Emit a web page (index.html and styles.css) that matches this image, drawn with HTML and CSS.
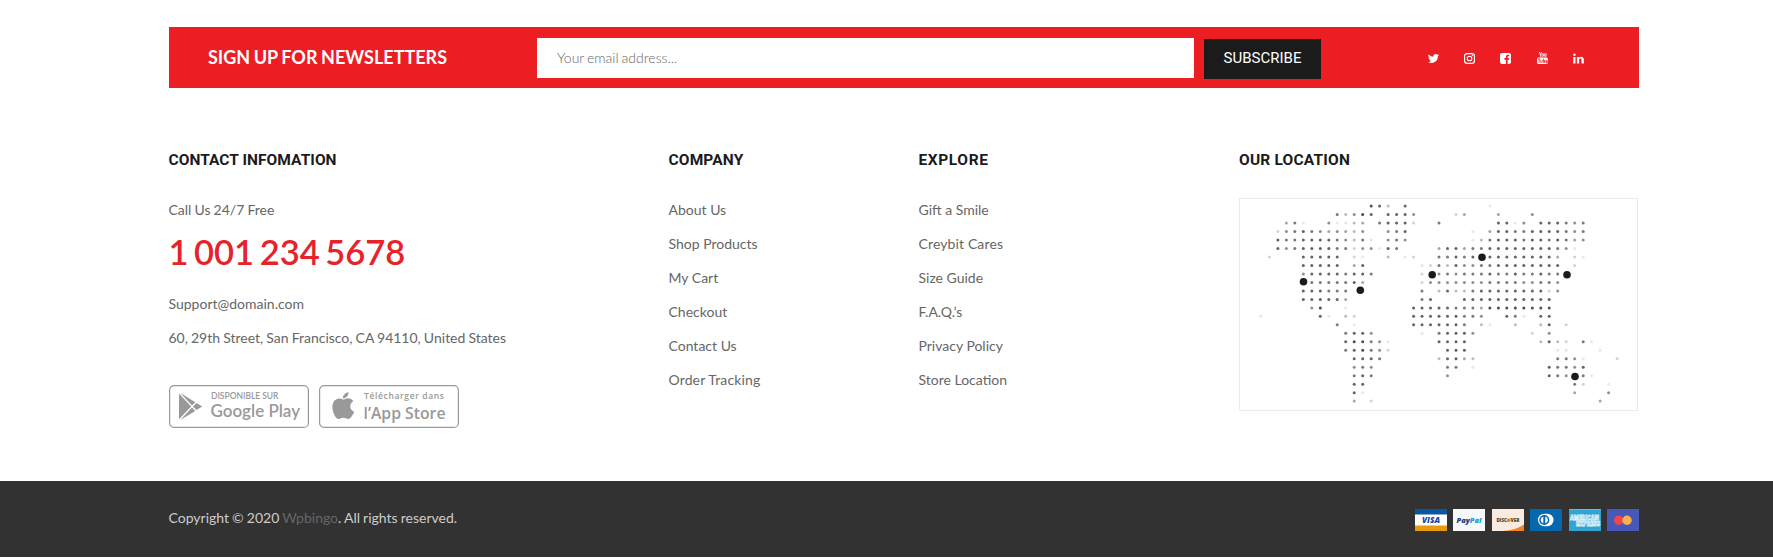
FILE: index.html
```html
<!DOCTYPE html>
<html lang="en">
<head>
<meta charset="utf-8">
<title>Footer</title>
<link rel="stylesheet" href="styles.css">
</head>
<body>
<footer>
  <section class="newsletter">
    <h2 class="newsletter-title">SIGN UP FOR NEWSLETTERS</h2>
    <form class="newsletter-form">
      <input class="email" type="email" placeholder="Your email address...">
      <button class="subscribe" type="button">SUBSCRIBE</button>
    </form>
    <nav class="social">
      <a><svg viewBox="0 0 24 24"><path d="M24 4.6a10 10 0 0 1-2.8.8 5 5 0 0 0 2.1-2.7 10 10 0 0 1-3.1 1.2A4.9 4.9 0 0 0 11.800 8.400 14 14 0 0 1 1.700 3.200a4.900 4.900 0 0 0 1.500 6.600 5 5 0 0 1-2.200-.6 4.900 4.900 0 0 0 3.900 4.900 5 5 0 0 1-2.200.1 4.900 4.900 0 0 0 4.600 3.400A10 10 0 0 1 0 19.500 14 14 0 0 0 21.500 7.100 10 10 0 0 0 24 4.600z"/></svg></a>
      <a><svg viewBox="0 0 24 24"><path fill-rule="evenodd" d="M7 0h10a7 7 0 0 1 7 7v10a7 7 0 0 1-7 7H7a7 7 0 0 1-7-7V7a7 7 0 0 1 7-7zm0 2.500A4.500 4.500 0 0 0 2.500 7v10A4.500 4.500 0 0 0 7 21.500h10a4.500 4.500 0 0 0 4.500-4.500V7A4.500 4.500 0 0 0 17 2.500zM12 5.800a6.200 6.200 0 1 1 0 12.400 6.200 6.200 0 0 1 0-12.400zm0 2.400a3.800 3.800 0 1 0 0 7.600 3.800 3.800 0 0 0 0-7.600z"/><circle cx="18.400" cy="5.600" r="1.600"/></svg></a>
      <a><svg viewBox="0 0 24 24"><path d="M4.500 0h15A4.500 4.500 0 0 1 24 4.500v15a4.500 4.500 0 0 1-4.500 4.500h-3v-9.300h3.100l.5-3.600h-3.600V8.800c0-1 .3-1.800 1.800-1.800h1.900V3.800c-.3 0-1.500-.1-2.800-.1-2.800 0-4.600 1.700-4.600 4.700v2.700H9.600v3.600h3.200V24H4.500A4.500 4.500 0 0 1 0 19.500v-15A4.500 4.500 0 0 1 4.500 0z"/></svg></a>
      <a><svg class="tall" viewBox="0 0 24 26"><path d="M4 0h2l1.300 4.200L8.600 0h2L8.200 6v4H6.300V6zM12.300 2.500c2 0 2.500 1 2.500 2.500v2.500c0 1.700-.8 2.600-2.500 2.600S9.900 9.200 9.900 7.500V5c0-1.500.6-2.500 2.400-2.500zm0 1.700c-.6 0-.7.400-.7.900v2.600c0 .5.200.8.700.8s.7-.3.700-.8V5.100c0-.5-.2-.9-.7-.9zM16 2.700h1.700V8c0 .5.600.3 1.200-.3v-5h1.700V10h-1.700v-.8C17.700 10.500 16 10.400 16 8.700z"/><path fill-rule="evenodd" d="M3.500 12h17a3.500 3.500 0 0 1 3.500 3.500v7a3.500 3.500 0 0 1-3.500 3.500h-17A3.500 3.500 0 0 1 0 22.500v-7A3.500 3.500 0 0 1 3.500 12zM2 14v1.600h1.800v8h1.700v-8h1.800V14zM7.500 17v5.300c0 1.800 1.800 1.600 2.900.4v.9h1.400V17h-1.400v5c-.7.700-1.400.7-1.400 0v-5zM13 14v9.600h1.400V23c1.200 1.200 3 .8 3-1.200v-3c0-2-1.700-2.500-2.900-1.200V14zm1.500 4.900c.6-.8 1.400-.5 1.400.3v2.300c0 .9-.8 1.200-1.400.5zM18.500 19.500v2c0 3 4.500 3 4.500 0v-.6h-1.500c0 2.100-1.500 1.900-1.500.6v-.8h3v-1.200c0-3.200-4.500-3.200-4.500 0zm1.500 0c0-1.600 1.500-1.600 1.500 0z"/></svg></a>
      <a><svg viewBox="0 0 24 24"><path d="M.5 8.500h4.900V23H.5zM8.500 8.500h4.700v2c2.300-3.600 10.300-3.300 10.300 3.500v9h-4.900v-8c0-4-5.200-3.700-5.200 0v8H8.500z"/><circle cx="3" cy="3.800" r="2.800"/></svg></a>
    </nav>
  </section>

  <section class="columns container">
    <div class="column contact">
      <h3 class="heading">CONTACT INFOMATION</h3>
      <p class="line">Call Us 24/7 Free</p>
      <p class="phone">1 001 234 5678</p>
      <p class="line">Support@domain.com</p>
      <p class="line">60, 29th Street, San Francisco, CA 94110, United States</p>
      <div class="badges">
        <svg class="badge" viewBox="0 0 140 43">
          <rect x=".6" y=".6" width="138.800" height="41.800" rx="4.500" class="badge-frame"/>
          <path d="M10 8.500v25.800L22.200 21.500zM11.300 8L23 20.600l3.300-3.400zM27.400 17.900L24 21.500l3.400 3.600 5.900-3.600zM23 22.400L11.300 35l15-9.100z"/>
          <text x="42" y="13.800" class="badge-small google" textLength="67.500" lengthAdjust="spacingAndGlyphs">DISPONIBLE SUR</text>
          <text x="41.500" y="32" class="badge-big google" textLength="89.500" lengthAdjust="spacingAndGlyphs">Google Play</text>
        </svg>
        <svg class="badge" viewBox="0 0 140 43">
          <rect x=".6" y=".6" width="138.800" height="41.800" rx="4.500" class="badge-frame"/>
          <path d="M29.500 7.200c.3 3.400-2.700 6.300-5.600 6.100-.3-3.200 2.800-6 5.600-6.100zM34.200 16.200c-4.400 2.700-3.700 8.600.9 10.500-1 3-3.500 7.200-6 7.200-1.900 0-2.400-1.100-4.700-1.100s-3 1.100-4.700 1.100c-3 0-6.300-6.300-6.300-11.700 0-8.800 7.300-9.600 9.500-8.300 1.300.7 2 .7 3.300.1 2.700-1.300 6.100-.8 8 2.200z"/>
          <text x="45" y="14.300" class="badge-small apple" textLength="80" lengthAdjust="spacing">Télécharger dans</text>
          <text x="44.500" y="33.500" class="badge-big apple" textLength="82" lengthAdjust="spacingAndGlyphs">l’App Store</text>
        </svg>
      </div>
    </div>
    <div class="column">
      <h3 class="heading company">COMPANY</h3>
      <p class="line">About Us</p>
      <p class="line">Shop Products</p>
      <p class="line">My Cart</p>
      <p class="line">Checkout</p>
      <p class="line">Contact Us</p>
      <p class="line loose">Order Tracking</p>
    </div>
    <div class="column">
      <h3 class="heading explore">EXPLORE</h3>
      <p class="line">Gift a Smile</p>
      <p class="line loose">Creybit Cares</p>
      <p class="line">Size Guide</p>
      <p class="line">F.A.Q.’s</p>
      <p class="line">Privacy Policy</p>
      <p class="line">Store Location</p>
    </div>
    <div class="column">
      <h3 class="heading location">OUR LOCATION</h3>
      <svg class="map" id="map" viewBox="0 0 399 213"></svg>
    </div>
  </section>

  <section class="bottom">
    <div class="bottom-inner container">
      <p class="copyright">Copyright © 2020 <a class="brand">Wpbingo</a>. All rights reserved.</p>
      <div class="cards">
        <svg class="card" viewBox="0 0 32 22"><rect width="32" height="22" fill="#fff"/><rect width="32" height="5.500" fill="#0c55a0"/><rect y="16.500" width="32" height="5.500" fill="#e89b0c"/><text x="7" y="14" textLength="18" lengthAdjust="spacingAndGlyphs" class="card-text" fill="#17479e" font-size="8">VISA</text></svg>
        <svg class="card" viewBox="0 0 32 22"><rect width="32" height="22" fill="#f7f8fb"/><text x="3.500" y="13.800" textLength="25" lengthAdjust="spacingAndGlyphs" class="card-text" fill="#253b80" font-size="7.500">Pay<tspan fill="#179bd7">Pal</tspan></text></svg>
        <svg class="card" viewBox="0 0 32 22"><rect width="32" height="22" fill="#f9ebe0"/><path d="M11 22Q24 21 32 15.500V22z" fill="#f58220"/><text x="4.500" y="13" textLength="10.500" lengthAdjust="spacingAndGlyphs" class="card-text upright" fill="#444" font-size="5">DISC</text><circle cx="16.600" cy="11.300" r="1.900" fill="#f58220"/><text x="18.500" y="13" textLength="9" lengthAdjust="spacingAndGlyphs" class="card-text upright" fill="#444" font-size="5">VER</text></svg>
        <svg class="card" viewBox="0 0 32 22"><rect width="32" height="22" fill="#0468ae"/><rect x="8" y="4.800" width="15.500" height="12.400" rx="6.200" fill="#fff"/><circle cx="14.300" cy="11" r="5.100" fill="#0468ae"/><path d="M13.300 7.400a3.800 3.800 0 0 0 0 7.200zM15.300 7.400a3.800 3.800 0 0 1 0 7.200z" fill="#fff"/></svg>
        <svg class="card" viewBox="0 0 32 22"><rect width="32" height="22" fill="#32a4d4"/><rect width="32" height="1" fill="#62bde0"/><g fill="#32a4d4" stroke="#e4f5fc" stroke-width=".8"><text x="1" y="10.800" textLength="29" lengthAdjust="spacingAndGlyphs" class="card-text upright" font-size="6.500">AMERICAN</text><text x="7" y="17" textLength="24" lengthAdjust="spacingAndGlyphs" class="card-text upright" font-size="6.500">EXPRESS</text></g></svg>
        <svg class="card" viewBox="0 0 32 22"><rect width="32" height="22" fill="#4758b8"/><circle cx="11.700" cy="11.200" r="4.700" fill="#f2444b"/><circle cx="20" cy="11.200" r="4.700" fill="#fbb04c"/></svg>
      </div>
    </div>
  </section>
</footer>
<script src="map.js"></script>
</body>
</html>
```
FILE: styles.css
```css
* { box-sizing: border-box; margin: 0; padding: 0; }
body { background: #fff; font-family: Lato, "Open Sans", sans-serif; font-size: 14px; color: #666; }
.container { width: 1470.500px; margin-left: 168.500px; }

.newsletter { width: 1470px; margin: 27px 0 0 169px; height: 61px; background: #ed1d24; display: flex; align-items: center; padding: 0 55px 0 39px; }
.newsletter-title { width: 329px; color: #fff; font-size: 18px; font-weight: 700; line-height: 24px; padding-bottom: 2px; word-spacing: -.8px; white-space: nowrap; }
.newsletter-form { display: flex; gap: 10px; align-items: flex-start; height: 39px; }
.email { width: 657px; height: 40px; border: 0; background: #fff; padding: 0 20px 1px; font: 300 14px Lato, sans-serif; word-spacing: -.8px; color: #666; }
.email::placeholder { color: #666; opacity: 1; }
.subscribe { width: 117px; height: 40px; margin-top: 1px; border: 0; background: #1b1b1b; color: #fff; font: 400 15px Roboto, sans-serif; padding-bottom: 2px; }
.social { margin-left: auto; display: flex; align-items: center; gap: 25.300px; padding-top: 1px; }
.social a { display: flex; width: 11px; }
.social svg { width: 11px; height: 11px; fill: #fff; }
.social .tall { height: 12px; }

.columns { display: grid; grid-template-columns: 500px 250px 320.500px 400px; height: 393px; padding-top: 61px; }
.heading { color: #1b1b1b; font: 700 15.500px/22px Roboto, sans-serif; margin-bottom: 22px; letter-spacing: .05px; white-space: nowrap; }
.company { letter-spacing: .15px; }
.explore { letter-spacing: .6px; }
.location { letter-spacing: .2px; }
.line { line-height: 34px; white-space: nowrap; }
.loose { letter-spacing: .13px; }
.contact .line { word-spacing: -.5px; }
.phone { font-size: 34.500px; font-weight: 600; line-height: 50px; padding-bottom: 10px; color: #e7222a; word-spacing: -3px; white-space: nowrap; }
.badges { display: flex; gap: 10px; margin: 30px 0 0 .500px; }
.badge { width: 140px; height: 43px; fill: #999; overflow: visible; }
.badge-frame { fill: #fff; stroke: #999; stroke-width: 1.200; }
.google { font-family: Lato, sans-serif; }
.apple { font-family: "Open Sans", sans-serif; font-weight: 600; }
.badge-small { font-size: 8.500px; font-weight: 600; }
.badge-big { font-size: 17px; font-weight: 600; }
.map { display: block; width: 399px; height: 213px; outline: 1px solid #ebebeb; outline-offset: -1px; margin-top: 27px; }
.location { margin-bottom: 0; }

.bottom { background: #323232; height: 76px; }
.bottom-inner { display: flex; justify-content: space-between; padding-top: 28px; }
.copyright { line-height: 18px; color: #ccc; word-spacing: -.5px; }
.brand { color: #666; }
.cards { display: flex; gap: 6.400px; }
.card { width: 32px; height: 22px; overflow: visible; }
.card-text { font-family: "Open Sans", sans-serif; font-weight: 800; font-style: italic; }
.upright { font-style: normal; }
```
FILE: map.js
```js
// Each row lists runs as "firstColumn:levels"; a level is the dot's darkness, "." leaves a gap.
const rows = [
  "12:873.7 26:1",
  "8:63587.7775 22:24 27:4...5",
  "2:461..51134.67772 20:6 27:7715.777656",
  "1:25676545435..567 24:1.477667777656",
  "1:766777765361.565 24:13677767767645",
  "1:756777766255176 20:47746677777777651",
  "0:2 4:77777.21..3.12 20:66767.777777774.21",
  "4:77777.47 18:12637556677777777.2",
  "4:577776776 18:2.565666766766766",
  "5:6666674 18:25555555666655665",
  "4:777666 18:6.373367777777725",
  "4:777774 18:67 23:77777777777",
  "5:58..1 17:777776664 26:88888888",
  "-1:1 6:71.32 17:777777665..761.77",
  "8:6.1 17:7777776.31..3..37.2",
  "9:6775 18:1.67775 31:2.5",
  "9:788651 20:7777 32:3732.61",
  "9:678652 21:777 34:11...1",
  "10:7776 20:37743 34:6651...2",
  "10:565 21:66.1 33:76657",
  "10:676 21:5 33:765.61",
  "10:77 36:62..1",
  "10:71 36:4...5",
  "10:4.2 39:4"
];
const pins = [[64.5, 83.8], [121.3, 92.2], [193.2, 76.7], [243, 59.2], [328, 76.7], [336, 178.5]];
const pitch = 8.48, left = 30.4, top0 = 8.1;
let shapes = "";
rows.forEach((row, r) => {
  row.split(" ").forEach(run => {
    const [start, levels] = run.split(":");
    [...levels].forEach((level, i) => {
      if (level === ".") return;
      const x = left + (Number(start) + i) * pitch;
      const y = top0 + r * pitch;
      shapes += `<circle cx="${x.toFixed(1)}" cy="${y.toFixed(1)}" r="1.5" fill="#222" opacity="${level / 10}"/>`;
    });
  });
});
pins.forEach(([x, y]) => {
  shapes += `<circle cx="${x}" cy="${y}" r="3.8" fill="#1b1b1b"/>`;
});
document.getElementById("map").innerHTML = shapes;
```
